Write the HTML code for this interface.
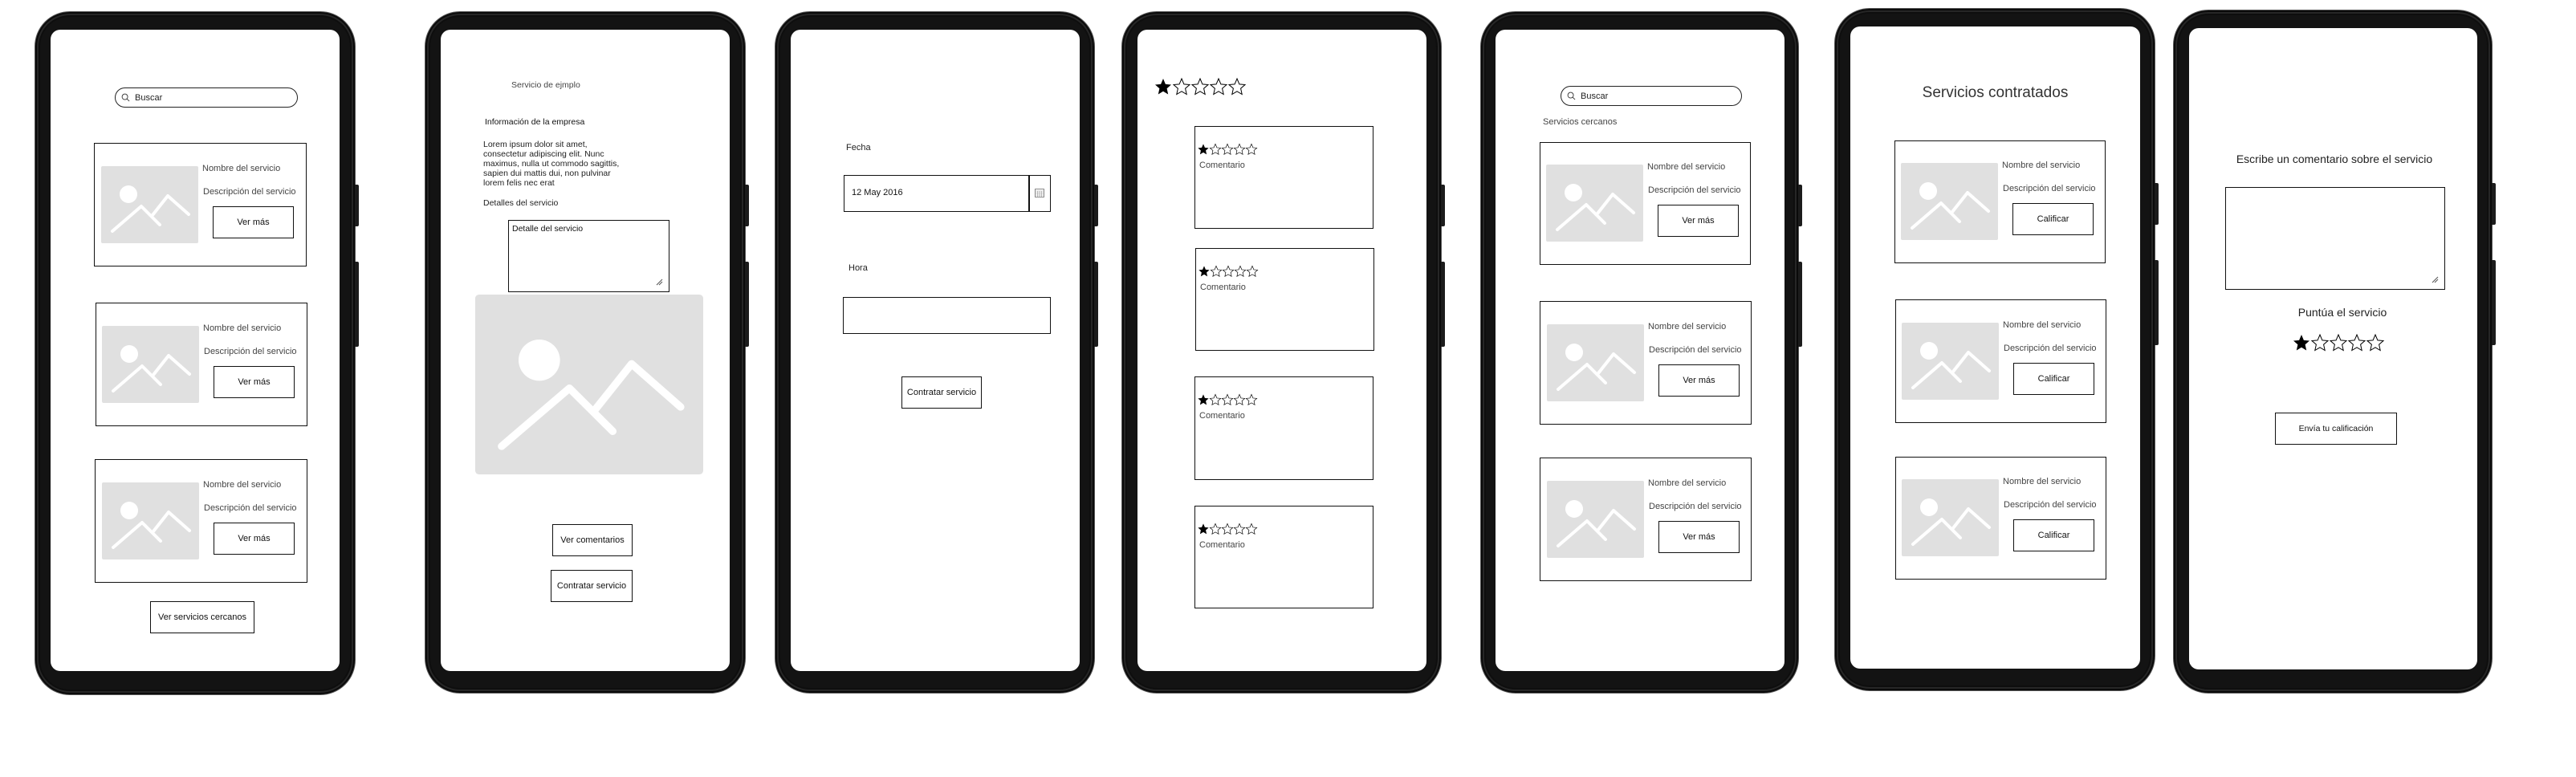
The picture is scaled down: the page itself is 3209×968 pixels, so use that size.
<!DOCTYPE html>
<html><head><meta charset="utf-8"><style>
*{margin:0;padding:0;box-sizing:border-box}
body{width:3209px;height:968px;background:#fff;position:relative;overflow:hidden;font-family:"Liberation Sans",sans-serif;color:#333}
.ph{position:absolute;border-radius:44px;background:#131313;box-shadow:inset 0 0 0 2px #0a0a0a,inset 0 0 0 4px #262626,inset 0 0 0 6px #0e0e0e;border:1px solid #555}
.sc{position:absolute;background:#fff;border-radius:12px}
.btn1{position:absolute;width:5px;background:#1c1c1c;border-radius:0 2px 2px 0}
.a{position:absolute;white-space:nowrap}
.box{position:absolute;border:1.5px solid #111;background:#fff}
.t{font-size:11px;color:#444}
.b{font-size:11px;color:#111;display:flex;align-items:center;justify-content:center}
.srch{position:absolute;border:1.5px solid #222;border-radius:14px;font-size:11px;color:#222;padding-left:24px;display:flex;align-items:center}
</style></head><body>
<svg width="0" height="0" style="position:absolute"><defs>
<symbol id="pic" viewBox="0 0 121 96" preserveAspectRatio="none"><rect width="121" height="96" fill="#e0e0e0" rx="2"/><circle cx="34" cy="35" r="11" fill="#fff"/><polyline points="14,81 50,50 73,73" fill="none" stroke="#fff" stroke-width="4" stroke-linecap="round" stroke-linejoin="round"/><polyline points="64,61 83,37 109,60" fill="none" stroke="#fff" stroke-width="4" stroke-linecap="round" stroke-linejoin="round"/></symbol>
<symbol id="sf" viewBox="0 0 24 24"><path d="M12 2l2.9 6.9 7.1.6-5.4 4.7 1.6 7.3L12 17.8 5.8 21.5l1.6-7.3L2 9.5l7.1-.6z" fill="#000"/></symbol>
<symbol id="so" viewBox="0 0 24 24"><path d="M12 2l2.9 6.9 7.1.6-5.4 4.7 1.6 7.3L12 17.8 5.8 21.5l1.6-7.3L2 9.5l7.1-.6z" fill="none" stroke="#000" stroke-width="1"/></symbol>
<symbol id="mag" viewBox="0 0 12 12"><circle cx="5" cy="5" r="3.8" fill="none" stroke="#333" stroke-width="1"/><line x1="7.8" y1="7.8" x2="11" y2="11" stroke="#333" stroke-width="1"/></symbol>
</defs></svg>

<!-- Phone 1 -->
<div class="ph" style="left:43px;top:14px;width:400px;height:852px"></div>
<div class="btn1" style="left:442px;top:230px;height:52px"></div>
<div class="btn1" style="left:442px;top:326px;height:106px"></div>
<div class="sc" style="left:63px;top:37px;width:360px;height:799px"></div>
<div class="srch" style="left:143px;top:109px;width:228px;height:25px">Buscar</div>
<svg class="a" style="left:151px;top:116px" width="11" height="11"><use href="#mag"/></svg>

<div class="box" style="left:117px;top:178px;width:265px;height:154px"></div>
<svg class="a" style="left:126px;top:207px" width="121" height="96"><use href="#pic"/></svg>
<div class="a t" style="left:252px;top:204px">Nombre del servicio</div>
<div class="a t" style="left:253px;top:233px">Descripción del servicio</div>
<div class="box b" style="left:265px;top:257px;width:101px;height:40px">Ver más</div>

<div class="box" style="left:119px;top:377px;width:264px;height:154px"></div>
<svg class="a" style="left:127px;top:406px" width="121" height="96"><use href="#pic"/></svg>
<div class="a t" style="left:253px;top:403px">Nombre del servicio</div>
<div class="a t" style="left:254px;top:432px">Descripción del servicio</div>
<div class="box b" style="left:266px;top:456px;width:101px;height:40px">Ver más</div>

<div class="box" style="left:118px;top:572px;width:265px;height:154px"></div>
<svg class="a" style="left:127px;top:601px" width="121" height="96"><use href="#pic"/></svg>
<div class="a t" style="left:253px;top:598px">Nombre del servicio</div>
<div class="a t" style="left:254px;top:627px">Descripción del servicio</div>
<div class="box b" style="left:266px;top:651px;width:101px;height:40px">Ver más</div>
<div class="box b" style="left:187px;top:749px;width:130px;height:40px">Ver servicios cercanos</div>

<!-- Phone 2 -->
<div class="ph" style="left:529px;top:14px;width:400px;height:850px"></div>
<div class="btn1" style="left:928px;top:230px;height:52px"></div>
<div class="btn1" style="left:928px;top:326px;height:106px"></div>
<div class="sc" style="left:549px;top:37px;width:360px;height:799px"></div>
<div class="a t" style="left:637px;top:100px;font-size:10.5px">Servicio de ejmplo</div>
<div class="a t" style="left:604px;top:146px;font-size:10.5px;color:#111">Información de la empresa</div>
<div class="a t" style="left:602px;top:174px;font-size:10.5px;line-height:12px;color:#222">Lorem ipsum dolor sit amet,<br>consectetur adipiscing elit. Nunc<br>maximus, nulla ut commodo sagittis,<br>sapien dui mattis dui, non pulvinar<br>lorem felis nec erat</div>
<div class="a t" style="left:602px;top:247px;font-size:10.5px;color:#222">Detalles del servicio</div>
<div class="box" style="left:633px;top:274px;width:201px;height:90px"></div>
<div class="a t" style="left:638px;top:279px;font-size:10.5px;color:#111">Detalle del servicio</div>
<svg class="a" style="left:816px;top:346px" width="10" height="10"><path d="M9 2L2 9M9 5L5 9" stroke="#555" stroke-width="1"/></svg>
<svg class="a" style="left:592px;top:367px" width="284" height="224"><use href="#pic"/></svg>
<div class="box b" style="left:688px;top:653px;width:100px;height:40px">Ver comentarios</div>
<div class="box b" style="left:686px;top:710px;width:102px;height:40px">Contratar servicio</div>

<!-- Phone 3 -->
<div class="ph" style="left:965px;top:14px;width:399px;height:850px"></div>
<div class="btn1" style="left:1363px;top:230px;height:52px"></div>
<div class="btn1" style="left:1363px;top:326px;height:106px"></div>
<div class="sc" style="left:985px;top:37px;width:360px;height:799px"></div>
<div class="a t" style="left:1054px;top:178px;color:#222">Fecha</div>
<div class="box" style="left:1051px;top:218px;width:258px;height:46px"></div>
<div class="a" style="left:1281px;top:218px;width:1.5px;height:46px;background:#111"></div>
<div class="a t" style="left:1061px;top:234px;color:#111">12 May 2016</div>
<svg class="a" style="left:1289px;top:234px" width="12" height="12"><rect x="0.5" y="1.5" width="11" height="10" fill="none" stroke="#888"/><path d="M1 4h10M1 6.5h10M1 9h10M3.5 4v7M6 4v7M8.5 4v7" stroke="#999" stroke-width=".6"/></svg>
<div class="a t" style="left:1057px;top:328px;color:#222">Hora</div>
<div class="box" style="left:1050px;top:370px;width:259px;height:46px"></div>
<div class="box b" style="left:1123px;top:469px;width:100px;height:40px">Contratar servicio</div>

<!-- Phone 4 -->
<div class="ph" style="left:1397px;top:14px;width:399px;height:850px"></div>
<div class="btn1" style="left:1795px;top:230px;height:52px"></div>
<div class="btn1" style="left:1795px;top:326px;height:106px"></div>
<div class="sc" style="left:1417px;top:37px;width:360px;height:799px"></div>
<svg class="a" style="left:1437px;top:96px" width="120" height="24"><use href="#sf" x="0" width="24" height="24"/><use href="#so" x="23" width="24" height="24"/><use href="#so" x="46" width="24" height="24"/><use href="#so" x="69" width="24" height="24"/><use href="#so" x="92" width="24" height="24"/></svg>

<div class="box" style="left:1488px;top:157px;width:223px;height:128px"></div>
<svg class="a" style="left:1491px;top:178px" width="80" height="16"><use href="#sf" x="0" width="16" height="16"/><use href="#so" x="15" width="16" height="16"/><use href="#so" x="30" width="16" height="16"/><use href="#so" x="45" width="16" height="16"/><use href="#so" x="60" width="16" height="16"/></svg>
<div class="a t" style="left:1494px;top:200px">Comentario</div>

<div class="box" style="left:1489px;top:309px;width:223px;height:128px"></div>
<svg class="a" style="left:1492px;top:330px" width="80" height="16"><use href="#sf" x="0" width="16" height="16"/><use href="#so" x="15" width="16" height="16"/><use href="#so" x="30" width="16" height="16"/><use href="#so" x="45" width="16" height="16"/><use href="#so" x="60" width="16" height="16"/></svg>
<div class="a t" style="left:1495px;top:352px">Comentario</div>

<div class="box" style="left:1488px;top:469px;width:223px;height:129px"></div>
<svg class="a" style="left:1491px;top:490px" width="80" height="16"><use href="#sf" x="0" width="16" height="16"/><use href="#so" x="15" width="16" height="16"/><use href="#so" x="30" width="16" height="16"/><use href="#so" x="45" width="16" height="16"/><use href="#so" x="60" width="16" height="16"/></svg>
<div class="a t" style="left:1494px;top:512px">Comentario</div>

<div class="box" style="left:1488px;top:630px;width:223px;height:128px"></div>
<svg class="a" style="left:1491px;top:651px" width="80" height="16"><use href="#sf" x="0" width="16" height="16"/><use href="#so" x="15" width="16" height="16"/><use href="#so" x="30" width="16" height="16"/><use href="#so" x="45" width="16" height="16"/><use href="#so" x="60" width="16" height="16"/></svg>
<div class="a t" style="left:1494px;top:673px">Comentario</div>

<!-- Phone 5 -->
<div class="ph" style="left:1844px;top:14px;width:397px;height:850px"></div>
<div class="btn1" style="left:2240px;top:230px;height:52px"></div>
<div class="btn1" style="left:2240px;top:326px;height:106px"></div>
<div class="sc" style="left:1863px;top:37px;width:360px;height:799px"></div>
<div class="srch" style="left:1944px;top:107px;width:226px;height:25px">Buscar</div>
<svg class="a" style="left:1952px;top:114px" width="11" height="11"><use href="#mag"/></svg>
<div class="a t" style="left:1922px;top:146px">Servicios cercanos</div>

<div class="box" style="left:1918px;top:177px;width:263px;height:153px"></div>
<svg class="a" style="left:1926px;top:205px" width="121" height="96"><use href="#pic"/></svg>
<div class="a t" style="left:2052px;top:202px">Nombre del servicio</div>
<div class="a t" style="left:2053px;top:231px">Descripción del servicio</div>
<div class="box b" style="left:2065px;top:255px;width:101px;height:40px">Ver más</div>

<div class="box" style="left:1918px;top:375px;width:264px;height:154px"></div>
<svg class="a" style="left:1927px;top:404px" width="121" height="96"><use href="#pic"/></svg>
<div class="a t" style="left:2053px;top:401px">Nombre del servicio</div>
<div class="a t" style="left:2054px;top:430px">Descripción del servicio</div>
<div class="box b" style="left:2066px;top:454px;width:101px;height:40px">Ver más</div>

<div class="box" style="left:1918px;top:570px;width:264px;height:154px"></div>
<svg class="a" style="left:1927px;top:599px" width="121" height="96"><use href="#pic"/></svg>
<div class="a t" style="left:2053px;top:596px">Nombre del servicio</div>
<div class="a t" style="left:2054px;top:625px">Descripción del servicio</div>
<div class="box b" style="left:2066px;top:649px;width:101px;height:40px">Ver más</div>

<!-- Phone 6 -->
<div class="ph" style="left:2285px;top:10px;width:400px;height:851px"></div>
<div class="btn1" style="left:2684px;top:228px;height:52px"></div>
<div class="btn1" style="left:2684px;top:324px;height:106px"></div>
<div class="sc" style="left:2305px;top:33px;width:361px;height:800px"></div>
<div class="a" style="left:2305px;top:105px;width:361px;text-align:center;font-size:19px;color:#333">Servicios contratados</div>

<div class="box" style="left:2360px;top:175px;width:263px;height:153px"></div>
<svg class="a" style="left:2368px;top:203px" width="121" height="96"><use href="#pic"/></svg>
<div class="a t" style="left:2494px;top:200px">Nombre del servicio</div>
<div class="a t" style="left:2495px;top:229px">Descripción del servicio</div>
<div class="box b" style="left:2507px;top:253px;width:101px;height:40px">Calificar</div>

<div class="box" style="left:2361px;top:373px;width:263px;height:154px"></div>
<svg class="a" style="left:2369px;top:402px" width="121" height="96"><use href="#pic"/></svg>
<div class="a t" style="left:2495px;top:399px">Nombre del servicio</div>
<div class="a t" style="left:2496px;top:428px">Descripción del servicio</div>
<div class="box b" style="left:2508px;top:452px;width:101px;height:40px">Calificar</div>

<div class="box" style="left:2361px;top:569px;width:263px;height:153px"></div>
<svg class="a" style="left:2369px;top:597px" width="121" height="96"><use href="#pic"/></svg>
<div class="a t" style="left:2495px;top:594px">Nombre del servicio</div>
<div class="a t" style="left:2496px;top:623px">Descripción del servicio</div>
<div class="box b" style="left:2508px;top:647px;width:101px;height:40px">Calificar</div>

<!-- Phone 7 -->
<div class="ph" style="left:2707px;top:12px;width:398px;height:852px"></div>
<div class="btn1" style="left:3104px;top:228px;height:52px"></div>
<div class="btn1" style="left:3104px;top:324px;height:106px"></div>
<div class="sc" style="left:2727px;top:35px;width:359px;height:799px"></div>
<div class="a" style="left:2727px;top:190px;width:362px;text-align:center;font-size:14px;color:#222">Escribe un comentario sobre el servicio</div>
<div class="box" style="left:2772px;top:233px;width:274px;height:128px"></div>
<svg class="a" style="left:3028px;top:343px" width="10" height="10"><path d="M9 2L2 9M9 5L5 9" stroke="#555" stroke-width="1"/></svg>
<div class="a" style="left:2727px;top:381px;width:382px;text-align:center;font-size:14px;color:#222">Puntúa el servicio</div>
<svg class="a" style="left:2855px;top:415px" width="120" height="24"><use href="#sf" x="0" width="24" height="24"/><use href="#so" x="23" width="24" height="24"/><use href="#so" x="46" width="24" height="24"/><use href="#so" x="69" width="24" height="24"/><use href="#so" x="92" width="24" height="24"/></svg>
<div class="box b" style="left:2834px;top:514px;width:152px;height:40px;font-size:10.5px">Envía tu calificación</div>
</body></html>
